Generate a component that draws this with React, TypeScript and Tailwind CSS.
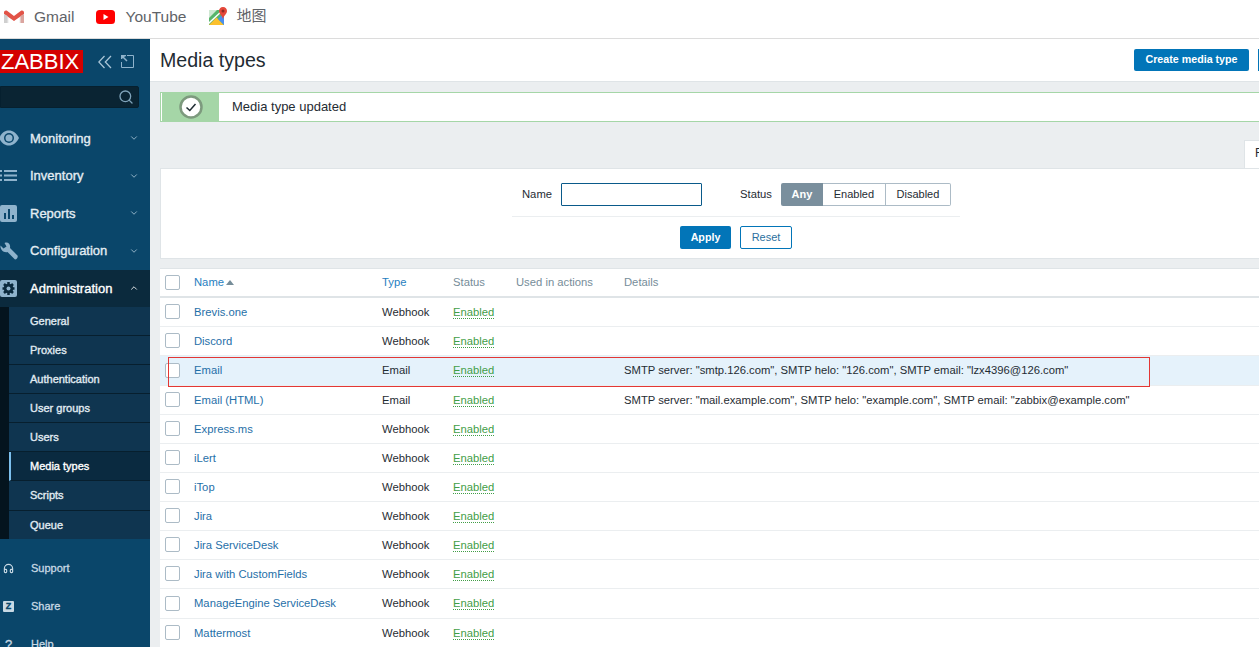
import { ChevronDown, ChevronUp, Search, Headphones } from "lucide-react";

const rows = [
  ["Brevis.one", "Webhook", ""],
  ["Discord", "Webhook", ""],
  ["Email", "Email", 'SMTP server: "smtp.126.com", SMTP helo: "126.com", SMTP email: "lzx4396@126.com"'],
  ["Email (HTML)", "Email", 'SMTP server: "mail.example.com", SMTP helo: "example.com", SMTP email: "zabbix@example.com"'],
  ["Express.ms", "Webhook", ""],
  ["iLert", "Webhook", ""],
  ["iTop", "Webhook", ""],
  ["Jira", "Webhook", ""],
  ["Jira ServiceDesk", "Webhook", ""],
  ["Jira with CustomFields", "Webhook", ""],
  ["ManageEngine ServiceDesk", "Webhook", ""],
  ["Mattermost", "Webhook", ""],
];

const subs = ["General", "Proxies", "Authentication", "User groups", "Users", "Media types", "Scripts", "Queue"];

function Check() {
  return <span className="block w-[15px] h-[15px] rounded-[2px] border border-[#acbbc6] bg-white" />;
}

function NavIcon({ name }: { name: string }) {
  const c = "#8fb3cc";
  if (name === "Monitoring")
    return (
      <svg width="20" height="16" viewBox="0 0 20 16" className="ml-[-1px]">
        <path d="M0 8C3 2.500 6 .5 10 .5S17 2.500 20 8c-3 5.500-6 7.500-10 7.500S3 13.500 0 8z" fill={c} />
        <circle cx="10" cy="8" r="5" fill="#0a466a" />
        <circle cx="10" cy="8" r="3.500" fill={c} />
      </svg>
    );
  if (name === "Inventory")
    return (
      <svg width="18" height="11" viewBox="0 0 18 11" className="ml-[-1px]" fill={c}>
        <rect x="0" y="0" width="3" height="2" />
        <rect x="0" y="4.500" width="3" height="2" />
        <rect x="0" y="9" width="3" height="2" />
        <rect x="5" y="0" width="13" height="2" />
        <rect x="5" y="4.500" width="13" height="2" />
        <rect x="5" y="9" width="13" height="2" />
      </svg>
    );
  if (name === "Reports")
    return (
      <svg width="17" height="17" viewBox="0 0 17 17">
        <rect x="0" y="0" width="17" height="17" rx="2" fill={c} />
        <rect x="4" y="8" width="2" height="6" fill="#0a466a" />
        <rect x="8" y="4" width="2" height="10" fill="#0a466a" />
        <rect x="12" y="10" width="2" height="4" fill="#0a466a" />
      </svg>
    );
  if (name === "Configuration")
    return (
      <svg width="18" height="18" viewBox="0 0 18 18">
        <path d="M.5 3.500 3.500 6.500 6.500 4.500 4.500 1C8 -.5 10.800 2 10 6L17.500 13.500c.8 1.500-.5 4-2.500 4L7.500 10C3.500 11 0 7.500.5 3.500z" fill={c} />
      </svg>
    );
  return (
    <svg width="17" height="17" viewBox="0 0 17 17">
      <rect x="0" y="0" width="17" height="17" rx="2" fill={c} />
      <path d="M8.500 2v13M2.500 8.500h12M4 4l9 9M13 4l-9 9" stroke="#0b2a3d" strokeWidth="2.500" />
      <circle cx="8.500" cy="8.500" r="4.800" fill="#0b2a3d" />
      <circle cx="8.500" cy="8.500" r="2" fill={c} />
    </svg>
  );
}

function MainNav({ name, open }: { name: string; open?: boolean }) {
  return (
    <div className={`flex items-center h-[37.500px] pr-[11px] ${open ? "bg-[#0b2a3d] text-white" : "text-[#e4edf3]"}`}>
      <span className="w-[30px] flex items-center shrink-0">
        <NavIcon name={name} />
      </span>
      <span className="text-[13px] flex-1 [-webkit-text-stroke:0.35px]">{name}</span>
      {open ? <ChevronUp size={10} strokeWidth={2} /> : <ChevronDown size={10} strokeWidth={2} className="text-[#a8c4d6]" />}
    </div>
  );
}

function Sidebar() {
  return (
    <aside className="w-[150px] shrink-0 bg-[#0a466a] flex flex-col">
      <div className="flex items-center h-[23px] mt-[11px] shrink-0">
        <div className="w-[83px] h-[23px] bg-[#d40000] text-white text-[22px] leading-[23px] pl-[1px] overflow-hidden">ZABBIX</div>
        <svg width="14" height="14" viewBox="0 0 14 14" className="ml-[15px]" fill="none" stroke="#a9c4d6" strokeWidth="1.300">
          <path d="M6.500 1 .8 7l5.700 6M13 1 7.300 7l5.700 6" />
        </svg>
        <svg width="13" height="13" viewBox="0 0 13 13" className="ml-[9px]" fill="none" stroke="#8fb3cc">
          <path d="M6 .5h6.500v12H.5V7" />
          <path d="M1 1l5 5" strokeWidth="1.500" />
          <path d="M.5 4V.5H5" fill="#8fb3cc" strokeWidth="1.500" />
        </svg>
      </div>
      <div className="mt-[13px] w-[139px] h-[22px] shrink-0 bg-[#0a2433] border border-[#06202f] rounded-r-[2px] flex items-center justify-end pr-[4px]">
        <Search size={16} strokeWidth={2} className="text-[#7fa3ba]" />
      </div>
      <nav className="mt-[11.500px] flex flex-col">
        <MainNav name="Monitoring" />
        <MainNav name="Inventory" />
        <MainNav name="Reports" />
        <MainNav name="Configuration" />
        <MainNav name="Administration" open />
        <div className="flex h-[232px]">
          <div className="w-[9px] bg-[#04141e]" />
          <div className="flex-1 bg-[#0f3550] overflow-hidden">
            {subs.map((s) => (
              <div
                key={s}
                className={`${s === "Scripts" ? "h-[30px]" : "h-[29px]"} flex items-center text-[11px] [-webkit-text-stroke:0.35px] border-b border-[#071f2e] ${
                  s === "Media types"
                    ? "bg-[#0a2a40] text-white border-l-2 border-l-[#7cc0ee] pl-[19px]"
                    : "text-[#e0ebf2] pl-[21px]"
                }`}
              >
                {s}
              </div>
            ))}
          </div>
        </div>
      </nav>
      <div className="mt-[10.500px] flex flex-col text-[11px] [-webkit-text-stroke:0.3px] text-[#c8d9e4]">
        <div className="flex items-center h-[38px]">
          <span className="w-[31px] pl-[3px]"><Headphones size={11} strokeWidth={2.500} className="text-[#c8d9e4]" /></span>Support
        </div>
        <div className="flex items-center h-[38px]">
          <span className="w-[31px] pl-[3px]">
            <span className="flex items-center justify-center w-[11px] h-[11px] bg-[#c8d9e4] text-[#0a466a] text-[9px] font-bold rounded-[1px]">Z</span>
          </span>Share
        </div>
        <div className="flex items-center h-[38px]">
          <span className="w-[31px] pl-[5px] text-[13px]">?</span>Help
        </div>
      </div>
    </aside>
  );
}

function Bookmarks() {
  return (
    <div className="h-[39px] shrink-0 bg-white border-b border-[#dcdcdc] flex items-center text-[15.500px] text-[#5f6368] pl-[4px] pb-[5px]">
      <svg width="20" height="14" viewBox="0 0 20 14" className="mr-[10px]">
        <path d="M1.500 13V3l8.500 6 8.500-6v10h-3V6.500L10 10.500 4.500 6.500V13z" fill="#ececec" />
        <path d="M0 2.500C0 .5 2 0 3 .8L10 6 17 .8C18 0 20 .5 20 2.500V4l-10 7L0 4z" fill="#e25347" />
        <path d="M0 4v9h3.500V6z" fill="#cfcfcf" />
        <path d="M20 4v9h-3.500V6z" fill="#dba59f" />
      </svg>
      <span className="mr-[22px]">Gmail</span>
      <svg width="19" height="14" viewBox="0 0 19 14" className="mr-[10px]">
        <rect width="19" height="14" rx="3.500" fill="#f00" />
        <path d="M7.500 4v6l5-3z" fill="#fff" />
      </svg>
      <span className="mr-[23px]">YouTube</span>
      <svg width="19" height="19" viewBox="0 0 19 19" className="mr-[8px]">
        <path d="M0 3h15v15H0z" fill="#57b56b" />
        <path d="M0 3h8L0 11z" fill="#cfe8d3" />
        <path d="M0 18 7.500 10.500 15 18z" fill="#fbc02d" />
        <path d="M15 18 9 12l6-6z" fill="#4a8ef0" />
        <path d="M0 15 13 3h2L0 17z" fill="#fff" />
        <path d="M14 0c-2.500 0-4 2-4 4 0 3 3 4 4 8 1-4 4-5 4-8 0-2-1.500-4-4-4z" fill="#e5483a" />
        <circle cx="14" cy="4" r="1.500" fill="#8f2a22" />
      </svg>
      <span className="font-['Liberation_Sans','Noto_Sans_CJK_SC',sans-serif] text-[15px]">地图</span>
    </div>
  );
}

function FilterPanel() {
  return (
    <div className="ml-[10px] shrink-0 bg-white border-y border-l border-[#dfe4e7] h-[91px] flex flex-col items-center">
      <div className="w-[448px] ml-[52px] border-b border-[#ebeef0] h-[48px] shrink-0 flex items-center text-[11.250px] text-[#1f2c33] pl-[10px] pt-[4px]">
        <span className="mr-[9px]">Name</span>
        <span className="block w-[141px] h-[23px] border border-[#0a5a8a] bg-white rounded-[1px] mr-[38px]" />
        <span className="mr-[9px]">Status</span>
        <div className="flex h-[23px] text-[11px] leading-[21px]">
          <span className="w-[42px] text-center bg-[#7a8f9d] text-white font-bold rounded-l-[2px] leading-[23px]">Any</span>
          <span className="w-[63px] text-center border-y border-r border-[#acbbc6]">Enabled</span>
          <span className="w-[65px] text-center border-y border-r border-[#acbbc6] rounded-r-[2px]">Disabled</span>
        </div>
      </div>
      <div className="ml-[52px] mt-[9px] flex gap-[9px]">
        <button className="w-[51px] h-[23px] bg-[#0275b8] text-white text-[10.700px] font-bold rounded-[2px]">Apply</button>
        <button className="w-[52px] h-[23px] border border-[#0275b8] text-[#2b6f9e] text-[11px] rounded-[2px]">Reset</button>
      </div>
    </div>
  );
}

function Table() {
  return (
    <div className="ml-[10px] mt-[9px] shrink-0 bg-white border-t border-[#dfe4e7] text-[11.250px]">
      <div className="flex items-center h-[29px] border-b-2 border-[#dfe4e7] relative">
        <span className="w-[34px] pl-[5px]"><Check /></span>
        <span className="w-[188px] text-[#1f7ec0] flex items-center">
          Name
          <svg width="8" height="5" viewBox="0 0 8 5" className="ml-[2px]"><path d="M0 5 4 0l4 5z" fill="#768d99" /></svg>
        </span>
        <span className="w-[71px] text-[#1f7ec0]">Type</span>
        <span className="w-[63px] text-[#768d99]">Status</span>
        <span className="w-[108px] text-[#768d99]">Used in actions</span>
        <span className="text-[#768d99]">Details</span>
      </div>
      {rows.map(([name, type, details]) => (
        <div
          key={name}
          className={`flex items-center ${name === "Email" || name === "ManageEngine ServiceDesk" ? "h-[30px]" : "h-[29px]"} border-b border-[#ebeef0] ${name === "Email" ? "bg-[#e5f2fb]" : ""}`}
        >
          <span className="w-[34px] pl-[5px] shrink-0 mt-[-1px]"><Check /></span>
          <span className="w-[188px] shrink-0 text-[#1f6fa8]">{name}</span>
          <span className="w-[71px] shrink-0 text-[#1f2c33]">{type}</span>
          <span className="w-[63px] shrink-0">
            <span className="text-[#429e47] border-b border-dotted border-[#429e47]">Enabled</span>
          </span>
          <span className="w-[108px] shrink-0" />
          <span className="text-[#1f2c33] whitespace-nowrap">{details}</span>
        </div>
      ))}
    </div>
  );
}

export default function App() {
  return (
    <div className="relative w-[1259px] h-[647px] overflow-hidden flex flex-col font-['Liberation_Sans',Arial,sans-serif] bg-[#ebeef0]">
      <Bookmarks />
      <div className="flex flex-1 min-h-0">
        <Sidebar />
        <main className="flex-1 min-w-0 flex flex-col">
          <header className="h-[43px] shrink-0 bg-white border-b border-[#dfe4e7] flex items-center pl-[10px]">
            <h1 className="text-[19.600px] text-[#1f2c33] flex-1 mt-[1px]">Media types</h1>
            <button className="w-[115px] h-[22px] mt-[-1px] bg-[#0275b8] text-white text-[10.700px] font-bold rounded-[2px]">Create media type</button>
            <span className="w-[1px] h-[22px] ml-[9px] mt-[-1px] bg-[#0275b8] shrink-0" />
          </header>
          <div className="ml-[10px] mt-[10px] h-[30px] shrink-0 bg-white border-y border-l border-[#a5d6a7] flex items-center text-[13px] text-[#1f2c33]">
            <span className="w-[58px] h-full bg-[#a5d6a7] flex items-center justify-center mr-[13px] border-l border-white">
              <svg width="24" height="24" viewBox="0 0 24 24">
                <circle cx="12" cy="12" r="10.500" fill="#fff" stroke="#7d9a7e" strokeWidth="2.500" />
                <path d="M7.500 12.500 10.800 15.500 16.500 9" fill="none" stroke="#1f2c33" strokeWidth="1.500" />
              </svg>
            </span>
            Media type updated
          </div>
          <div className="mt-[18px] h-[28px] shrink-0 flex justify-end">
            <span className="w-[15px] bg-white border-t border-l border-[#dfe4e7] text-[12px] text-[#1f2c33] pl-[10px] pt-[6px] leading-none overflow-hidden">F</span>
          </div>
          <FilterPanel />
          <Table />
        </main>
      </div>
      <div className="absolute left-[168px] top-[357px] w-[982px] h-[30px] border border-[#e33734] pointer-events-none" />
    </div>
  );
}
